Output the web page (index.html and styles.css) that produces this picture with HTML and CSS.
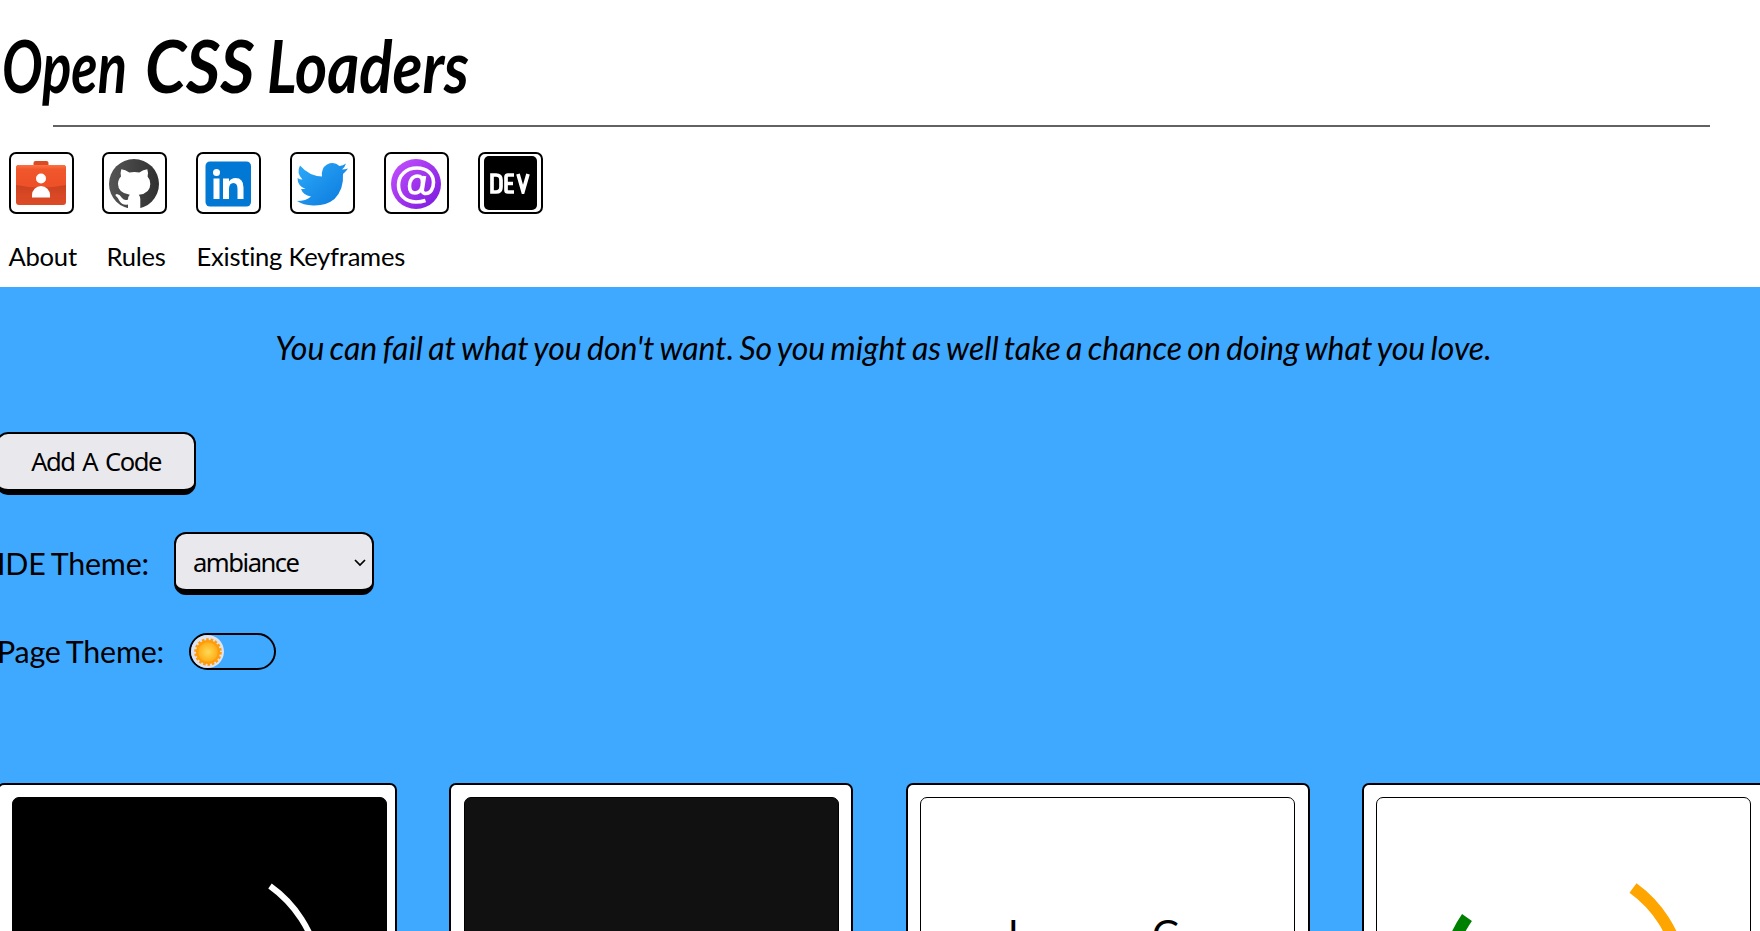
FILE: index.html
```html
<!DOCTYPE html>
<html lang="en">
<head>
<meta charset="utf-8">
<title>Open CSS Loaders</title>
<link rel="stylesheet" href="styles.css">
</head>
<body>
<header class="header">
  <h1 class="title"><span class="w-open">Open</span><span class="w-css">CSS</span><span class="w-loaders">Loaders</span></h1>
  <hr class="rule">
  <div class="socials">
    <a class="social"><svg width="52" height="52" viewBox="0 0 52 52"><defs><linearGradient id="o" x2="0" y2="1"><stop stop-color="#ff7043"/><stop offset=".2" stop-color="#f0572b"/><stop offset="1" stop-color="#ee4f27"/></linearGradient><linearGradient id="o2" x2="0" y2="1"><stop offset=".45" stop-color="#c8401f"/><stop offset=".75" stop-color="#d84824"/><stop offset="1" stop-color="#dc4a26"/></linearGradient></defs><path d="M18.500 9V5q0-2 2-2h11q2 0 2 2v4z" fill="#d94a25"/><rect x="1" y="7" width="50" height="40" rx="3" fill="url(#o2)"/><path d="M1 27V10q0-3 3-3h44q3 0 3 3v17q-25 5-50 0z" fill="url(#o)"/><circle cx="26" cy="20.500" r="5" fill="#fff"/><path d="M17 39.500V37a9 9 0 0 1 18 0v2.500z" fill="#fff"/></svg></a>
    <a class="social"><svg width="52" height="52" viewBox="0 0 52 52"><defs><linearGradient id="g"><stop stop-color="#555"/><stop offset="1" stop-color="#303030"/></linearGradient></defs><circle cx="26" cy="26" r="25" fill="url(#g)"/><path d="M13.300 11.300q4 .3 8 3.200 5-1.200 10 0 4-2.900 8-3.200 1.300 4 .3 7.200 2.700 3 2.700 7.500 0 9.500-11.500 10.800 1.500 1.700 1.500 4.200v10.500H20V46.500q-6 1-8.500-3.500-1.200-3-4-5.500-.5-1.500 1.500-1.500 3 .5 5 4 2.500 3 6 1.500 0-3 1.800-4.700Q10 35 10 26q0-4.500 3-7.500-1-3.200.3-7.200z" fill="#fff"/></svg></a>
    <a class="social"><svg width="52" height="52" viewBox="0 0 52 52"><rect x="3.500" y="3.500" width="45.500" height="45" rx="4.500" fill="#0078d4"/><circle cx="14.500" cy="14.500" r="3.500" fill="#fff"/><path d="M11.500 20.500h6v20.500h-6zM21 20.500h6v3q2-3.500 6.500-3.500 8 0 8 9.500V41h-6V31q0-6-4-6-4.500 0-4.500 6v10h-6z" fill="#fff"/></svg></a>
    <a class="social"><svg width="52" height="52" viewBox="0 0 52 52"><defs><linearGradient id="t" x2="1" y2="1"><stop stop-color="#2daafa"/><stop offset="1" stop-color="#0a78dc"/></linearGradient></defs><path d="M52 10.500q-2 3-5 5.500 1 15-8.500 25Q30 48 17 47.500 7 47 1 43q9 0 14-4.500-8-1.500-10-7.500h4.500Q1.500 28 1.500 20q2 1.500 5 1.500Q0 15 4 7.500 13 18 26 18.500 25 10 31 6.500q7-3.500 12.500 1.500 3.500-.5 6.500-2.500-1 3.500-4 6 3-.2 6-1z" fill="url(#t)"/></svg></a>
    <a class="social"><svg width="52" height="52" viewBox="0 0 52 52"><defs><linearGradient id="p" x2="1" y2="1"><stop stop-color="#c652ff"/><stop offset="1" stop-color="#7a17dc"/></linearGradient></defs><circle cx="26" cy="26" r="25" fill="url(#p)"/><path d="M35.500 42.500Q31 44 26 44C15 44 8.500 36.500 8.500 27S16 10 27 10c10 0 16.500 6 16.500 14.500 0 6-3 11-7.500 11-4 0-4-3-3.500-5l2-12.500M32.500 24c0-4-2-6-5-6-5 0-8 4.500-8 10 0 4.500 2 7 5.500 7 5 0 7.500-5 7.500-11z" fill="none" stroke="#fff" stroke-width="3.600"/></svg></a>
    <a class="social dev"><span class="dev-mark"><svg width="40" height="21" viewBox="0 0 40 21"><path d="M2 2h4q5 0 5 5v7q0 5-5 5H2zM24 2h-6q-2 0-2 2v13q0 2 2 2h6M16 10.500h7M28 1l5 17.500L38 1" fill="none" stroke="#fff" stroke-width="3.700"/></svg></span></a>
  </div>
  <nav class="nav"><a class="n1">About</a><a class="n2">Rules</a><a class="n3">Existing Keyframes</a></nav>
</header>
<main class="main">
  <p class="quote">You can fail at what you don't want. So you might as well take a chance on doing what you love.</p>
  <button class="control add">Add A Code</button>
  <div class="row ide"><span class="label l-ide">IDE Theme:</span><div class="control select"><span>ambiance</span><svg width="12" height="8" viewBox="0 0 12 8"><path d="M1 1l5 5 5-5" fill="none" stroke="#000" stroke-width="1.700"/></svg></div></div>
  <div class="row page"><span class="label l-page">Page Theme:</span><div class="toggle"><div class="knob"><svg width="30" height="30" viewBox="-15 -15 30 30"><defs><radialGradient id="s"><stop stop-color="#ffd95a"/><stop offset=".6" stop-color="#ffc02e"/><stop offset="1" stop-color="#ffad1e"/></radialGradient></defs><circle r="12.300" fill="none" stroke="#ff9c08" stroke-width="3" stroke-dasharray="2.500 1.794"/><circle r="12" fill="#ff9c08"/><circle r="9.800" fill="url(#s)"/></svg></div></div></div>
  <section class="cards">
    <article class="card first"><div class="preview black"><svg width="375" height="375" viewBox="-187.500 -187.500 375 375"><path d="M70.500-98.500A121 121 0 0 1 98.500 70.500" fill="none" stroke="#fff" stroke-width="6"/></svg></div></article>
    <article class="card"><div class="preview dark"></div></article>
    <article class="card"><div class="preview"><div class="word"><span>L</span><span class="low">O</span><span class="low">A</span><span class="low">D</span><span class="low">I</span><span class="low">N</span><span>G</span></div></div></article>
    <article class="card"><div class="preview"><svg width="375" height="375" viewBox="-187.500 -187.500 375 375"><path d="M69.500-96.500A119 119 0 0 1 96.500 69.500" fill="none" stroke="orange" stroke-width="12"/><path d="M-96.500-67A117.500 117.500 0 0 0-67 96.500" fill="none" stroke="green" stroke-width="12"/></svg></div></article>
  </section>
</main>
</body>
</html>
```
FILE: styles.css
```css
* { box-sizing: border-box; }
body { margin: 0; width: 1760px; height: 931px; overflow: hidden; background: #fff; color: #000; font-family: Lato, sans-serif; font-variant-ligatures: none; }
.header { height: 287px; display: flex; flex-direction: column; }
.title { margin: 0; height: 125px; padding: 27px 0 0 2px; display: flex; font-size: 72px; line-height: 76px; font-style: italic; font-weight: 700; white-space: nowrap; }
.title span { display: block; transform-origin: 0 50%; }
.w-open { width: 143px; transform: scaleX(.75); }
.w-css { width: 122px; transform: scaleX(.92); }
.w-loaders { transform: scaleX(.855); }
.rule { margin: 0 50px 0 53px; border: 0; height: 2px; background: #626262; flex: none; }
.socials { display: flex; gap: 28.85px; padding: 25px 0 0 8.6px; }
.social { width: 65px; height: 62px; border: 2px solid #000; border-radius: 7px; display: flex; align-items: center; justify-content: center; }
.social > svg { margin: 2px 1px 0 0; }
.dev-mark { width: 53px; height: 54px; background: #000; border-radius: 5px; display: flex; align-items: center; justify-content: center; }
.nav { display: flex; padding: 27px 0 0 8.5px; font-size: 25.6px; line-height: 31px; letter-spacing: -.25px; white-space: nowrap; }
.n1 { width: 98px; }
.n2 { width: 90px; }
.main { height: 644px; background: #3fa8ff; overflow: hidden; }
.quote { margin: 0; height: 145px; padding-top: 42px; text-align: center; font-size: 32px; line-height: 38px; font-style: italic; word-spacing: -2.2px; white-space: nowrap; padding-left: 7px; }
.control { height: 63px; border: 2px solid #000; border-bottom-width: 6px; border-radius: 12px; background: #e9e9ed; color: #000; font: 25.6px/34px "Noto Sans", sans-serif; letter-spacing: -1.5px; word-spacing: 2.7px; white-space: nowrap; }
.add { display: block; width: 200px; margin-left: -4px; padding: 0; }
.row { display: flex; align-items: center; }
.ide { margin-top: 37px; height: 63px; }
.page { margin-top: 38px; height: 37px; }
.label { font-size: 30.4px; line-height: 37px; letter-spacing: -.2px; word-spacing: -1.5px; white-space: nowrap; margin-left: -3px; }
.l-ide { width: 177px; }
.l-page { width: 192px; }
.select { width: 200px; display: flex; align-items: center; justify-content: space-between; padding: 2px 6px 0 17px; }
.toggle { width: 87px; height: 37px; border: 2px solid #000; border-radius: 19px; }
.knob { width: 33px; height: 33px; border-radius: 50%; background: #dfe3ef; display: flex; align-items: center; justify-content: center; }
.cards { display: flex; gap: 52.3px; margin: 113px 0 0 -3px; }
.card { flex: none; width: 404px; height: 404px; border: 2px solid #000; border-radius: 7px; background: #fff; padding: 12px 12.500px; }
.first { width: 400px; padding-left: 13px; }
.preview { width: 375px; height: 376px; border: 1px solid #000; border-radius: 7px; background: #fff; overflow: hidden; }
.preview svg { display: block; margin: -1px; }
.black { background: #000; }
.dark { background: #111; border-color: #000; }
.word { display: flex; padding: 111px 0 0 87px; font-size: 38px; line-height: 48px; }
.word .low { padding-top: 18px; }
```
